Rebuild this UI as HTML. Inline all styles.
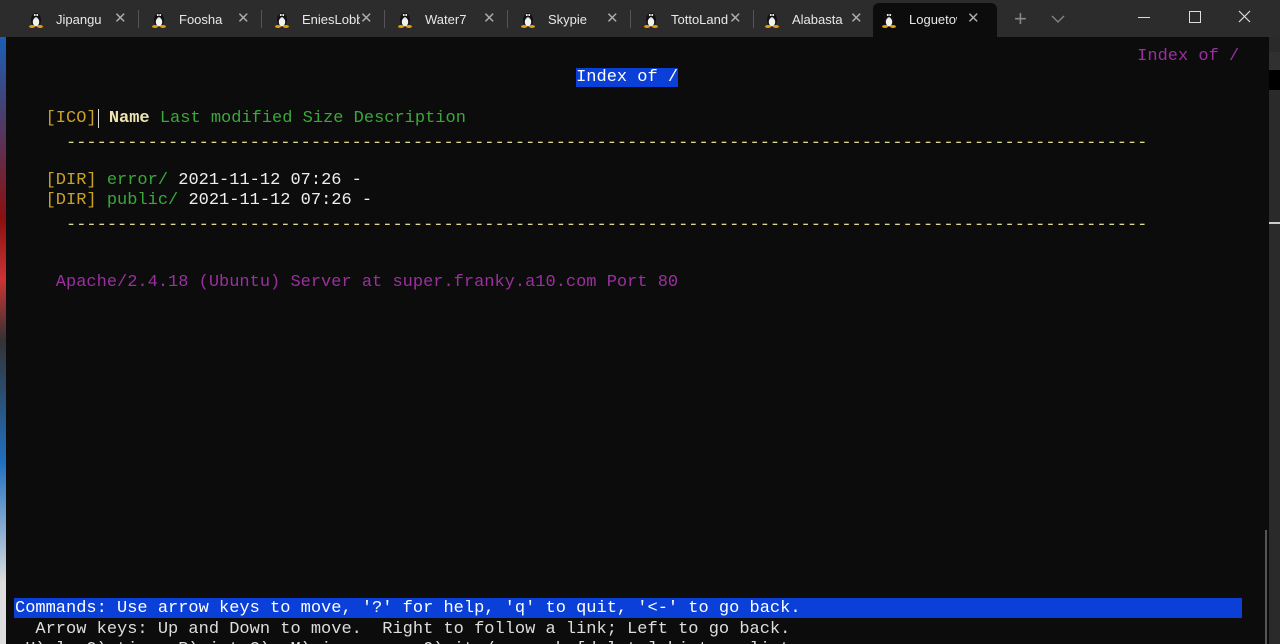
<!DOCTYPE html>
<html style="overflow:hidden;height:644px"><head><meta charset="utf-8"><style>
body{margin:0;width:1280px;height:644px;background:#0c0c0c;overflow:hidden;position:relative;font-family:"Liberation Sans",sans-serif}
#tabbar{position:absolute;left:0;top:0;width:1280px;height:37px;background:#2c2c2c}
.tab{position:absolute;top:0;height:37px;width:123px;color:#e8e8e8;font-size:13px}
.tab .ic{position:absolute;left:8px;top:10px}
.tab .t{position:absolute;left:36px;top:12px;width:58px;overflow:hidden;white-space:nowrap}
.tab .x{position:absolute;left:94px;top:9px;color:#aaa;font-size:15px}
.sep{position:absolute;top:10px;width:1px;height:18px;background:#555}
.active{background:#0c0c0c;top:3px;height:34px;border-radius:6px 6px 0 0}
.l{position:absolute;left:15px;font-family:"Liberation Mono",monospace;font-size:17px;white-space:pre;line-height:20px}
</style></head><body>
<div style="position:absolute;left:0;top:37px;width:6px;height:607px;background:linear-gradient(#1a5fb4,#8a1010 30%,#c33 40%,#333 50%,#2070c0 70%,#ddd 90%)"></div>
<div style="position:absolute;left:1269px;top:37px;width:11px;height:607px;background:#2a2a2a"></div>
<div style="position:absolute;left:1269px;top:52px;width:11px;height:20px;background:#303030"></div>
<div style="position:absolute;left:1269px;top:70px;width:11px;height:20px;background:#000"></div>
<div style="position:absolute;left:1269px;top:222px;width:11px;height:2px;background:#ccc"></div>
<div style="position:absolute;left:1265px;top:530px;width:2px;height:114px;background:#555"></div>
<div id="tabbar">
<svg width="0" height="0" style="position:absolute"><defs><symbol id="tux" viewBox="0 0 16 18"><ellipse cx="8" cy="10" rx="5" ry="7" fill="#111"/><ellipse cx="8" cy="12" rx="3.2" ry="4.5" fill="#f2f2f2"/><circle cx="6.8" cy="5" r="1" fill="#fff"/><circle cx="9.2" cy="5" r="1" fill="#fff"/><path d="M6.5 7h3l-1.5 1.5z" fill="#e0a010"/><ellipse cx="4" cy="16.5" rx="3" ry="1.5" fill="#e0a010"/><ellipse cx="12" cy="16.5" rx="3" ry="1.5" fill="#e0a010"/></symbol></defs></svg>
<div class="tab" style="left:20px"><svg class="ic" width="16" height="18"><use href="#tux"/></svg><span class="t">Jipangu</span><span class="x">✕</span></div>
<div class="sep" style="left:138px"></div>
<div class="tab" style="left:143px"><svg class="ic" width="16" height="18"><use href="#tux"/></svg><span class="t">Foosha</span><span class="x">✕</span></div>
<div class="sep" style="left:261px"></div>
<div class="tab" style="left:266px"><svg class="ic" width="16" height="18"><use href="#tux"/></svg><span class="t">EniesLobby</span><span class="x">✕</span></div>
<div class="sep" style="left:384px"></div>
<div class="tab" style="left:389px"><svg class="ic" width="16" height="18"><use href="#tux"/></svg><span class="t">Water7</span><span class="x">✕</span></div>
<div class="sep" style="left:507px"></div>
<div class="tab" style="left:512px"><svg class="ic" width="16" height="18"><use href="#tux"/></svg><span class="t">Skypie</span><span class="x">✕</span></div>
<div class="sep" style="left:630px"></div>
<div class="tab" style="left:635px"><svg class="ic" width="16" height="18"><use href="#tux"/></svg><span class="t">TottoLand</span><span class="x">✕</span></div>
<div class="sep" style="left:753px"></div>
<div class="tab" style="left:756px"><svg class="ic" width="16" height="18"><use href="#tux"/></svg><span class="t" style="width:56px">Alabasta</span><span class="x">✕</span></div>
<div class="tab active" style="left:873px;width:124px"><svg class="ic" style="top:7px" width="16" height="18"><use href="#tux"/></svg><span class="t" style="top:9px;width:48px">Loguetown</span><span class="x" style="top:6px">✕</span></div>
<div style="position:absolute;left:1014px;top:6px;color:#888;font-size:22px;font-weight:300">+</div>
<svg style="position:absolute;left:1051px;top:14px" width="14" height="10"><path d="M1 2l6 6 6-6" stroke="#888" fill="none" stroke-width="1.3"/></svg>
<div style="position:absolute;left:1138px;top:17px;width:12px;height:1px;background:#ddd"></div>
<div style="position:absolute;left:1189px;top:11px;width:10px;height:10px;border:1px solid #ddd"></div>
<svg style="position:absolute;left:1238px;top:10px" width="13" height="13"><path d="M1 1l11 11M12 1L1 12" stroke="#ddd" stroke-width="1.2"/></svg>
</div>
<div class="l" style="top:47px;color:#9b2fa0">                                                                                                              Index of /</div>
<div class="l" style="top:68px;color:#fff">                                                       <span style="background:#0a3fd8">Index of /</span></div>
<div class="l" style="top:109px"><span style="color:#c9a227">   [ICO]</span><span style="border-left:1px solid #ddd;margin-left:1px"> </span><span style="color:#efe4b0;font-weight:bold">Name</span><span style="color:#3aa83a"> Last modified Size Description</span></div>
<div class="l" style="top:134px;color:#e0d890">     ----------------------------------------------------------------------------------------------------------</div>
<div class="l" style="top:171px"><span style="color:#c9a227">   [DIR]</span> <span style="color:#3aa83a">error/</span><span style="color:#eee"> 2021-11-12 07:26 -</span></div>
<div class="l" style="top:191px"><span style="color:#c9a227">   [DIR]</span> <span style="color:#3aa83a">public/</span><span style="color:#eee"> 2021-11-12 07:26 -</span></div>
<div class="l" style="top:216px;color:#e0d890">     ----------------------------------------------------------------------------------------------------------</div>
<div class="l" style="top:273px;color:#9b2fa0">    Apache/2.4.18 (Ubuntu) Server at super.franky.a10.com Port 80</div>
<div style="position:absolute;left:14px;top:598px;width:1228px;height:20px;background:#0a3fd8"></div>
<div class="l" style="top:599px;color:#fff">Commands: Use arrow keys to move, '?' for help, 'q' to quit, '&lt;-' to go back.</div>
<div class="l" style="top:620px;color:#ddd">  Arrow keys: Up and Down to move.  Right to follow a link; Left to go back.</div>
<div class="l" style="top:640px;color:#ddd"> H)elp O)ptions P)rint G)o M)ain screen Q)uit /=search [delete]=history list</div>
</body></html>
